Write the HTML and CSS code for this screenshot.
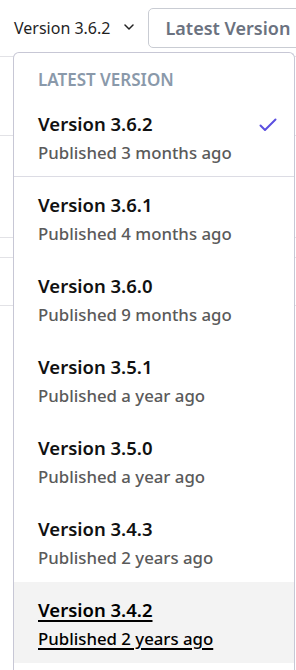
FILE: index.html
```html
<!DOCTYPE html>
<html lang="en">
<head>
<meta charset="utf-8">
<title>Versions</title>
<link rel="stylesheet" href="styles.css">
</head>
<body>
<header class="toolbar">
  <button class="version-toggle" type="button">
    <span class="version-label">Version 3.6.2</span>
    <svg class="chevron" width="10" height="6" viewBox="0 0 10 6" aria-hidden="true"><path d="M1 1l4 4 4-4" fill="none" stroke="#222" stroke-width="1.5" stroke-linecap="round" stroke-linejoin="round"/></svg>
  </button>
  <div class="tag-input">Latest Version</div>
</header>

<main class="page">
  <div class="page-row r1"></div>
  <div class="page-row r2"></div>
  <div class="page-row r3"></div>
  <div class="page-row r4"></div>
  <div class="page-row r5"></div>
</main>

<div class="menu" role="listbox">
  <div class="menu-heading">LATEST VERSION</div>
  <div class="menu-item first selected">
    <div class="item-text">
      <div class="item-title">Version 3.6.2</div>
      <div class="item-sub">Published 3 months ago</div>
    </div>
    <svg class="check" width="18" height="14" viewBox="0 0 18 14" aria-hidden="true"><path d="M1.5 7.5l4.5 4.5 10.5-10.5" fill="none" stroke="#5b4fe0" stroke-width="2" stroke-linecap="round" stroke-linejoin="round"/></svg>
  </div>
  <div class="menu-item">
    <div class="item-text">
      <div class="item-title">Version 3.6.1</div>
      <div class="item-sub">Published 4 months ago</div>
    </div>
  </div>
  <div class="menu-item">
    <div class="item-text">
      <div class="item-title">Version 3.6.0</div>
      <div class="item-sub">Published 9 months ago</div>
    </div>
  </div>
  <div class="menu-item">
    <div class="item-text">
      <div class="item-title">Version 3.5.1</div>
      <div class="item-sub">Published a year ago</div>
    </div>
  </div>
  <div class="menu-item">
    <div class="item-text">
      <div class="item-title">Version 3.5.0</div>
      <div class="item-sub">Published a year ago</div>
    </div>
  </div>
  <div class="menu-item">
    <div class="item-text">
      <div class="item-title">Version 3.4.3</div>
      <div class="item-sub">Published 2 years ago</div>
    </div>
  </div>
  <div class="menu-item hover">
    <div class="item-text">
      <div class="item-title">Version 3.4.2</div>
      <div class="item-sub">Published 2 years ago</div>
    </div>
  </div>
</div>
</body>
</html>
```
FILE: styles.css
```css
html, body {
  margin: 0;
  padding: 0;
  height: 100%;
  overflow: hidden;
  background: #fff;
}
body {
  position: relative;
  font-family: "Noto Sans", "Open Sans", sans-serif;
  color: #111;
}

.toolbar {
  display: flex;
  align-items: center;
  height: 40px;
  padding: 8px 0 0 14px;
}
.version-toggle {
  display: flex;
  align-items: center;
  gap: 14px;
  padding: 0;
  border: 0;
  background: none;
  font: inherit;
  font-size: 16px;
  color: #1f1f1f;
  white-space: nowrap;
}
.chevron {
  display: block;
  margin-top: -2px;
}
.tag-input {
  flex: none;
  margin-left: 14px;
  width: 220px;
  height: 40px;
  box-sizing: border-box;
  border: 1px solid #c9ccd3;
  border-radius: 5px;
  padding-left: 16px;
  display: flex;
  align-items: center;
  font-size: 18px;
  font-weight: 600;
  color: #6b7280;
  white-space: nowrap;
}

.page-row {
  border-bottom: 1px solid #e2e2e6;
}
.r1 { height: 8px; }
.r2 { height: 78px; }
.r3 { height: 101px; }
.r4 { height: 19px; }
.r5 { height: 47px; }

.menu {
  position: absolute;
  left: 13px;
  top: 52px;
  width: 282px;
  box-sizing: border-box;
  border: 1px solid #c7c7d5;
  border-bottom: 0;
  border-radius: 6px 6px 0 0;
  background: #fff;
  padding-bottom: 12px;
}
.menu-heading {
  padding: 17px 24px 6px;
  line-height: 20px;
  font-size: 17px;
  font-weight: 600;
  color: #8a99aa;
}
.menu-item {
  display: flex;
  align-items: flex-start;
  justify-content: space-between;
  height: 81px;
  box-sizing: border-box;
  padding: 15px 17px 0 24px;
}
.menu-item.first {
  border-bottom: 1px solid #dcdce4;
}
.item-title {
  font-size: 18.5px;
  line-height: 26px;
  font-weight: 600;
  color: #111;
  white-space: nowrap;
}
.item-sub {
  margin-top: 5px;
  font-size: 16.8px;
  line-height: 22px;
  font-weight: 500;
  color: #5a5a5a;
  white-space: nowrap;
}
.check {
  display: block;
  margin-top: 7px;
}
.menu-item.hover {
  background: #f3f3f3;
}
.menu-item.hover .item-title,
.menu-item.hover .item-sub {
  color: #000;
  text-decoration: underline;
  text-decoration-thickness: 1.5px;
  text-underline-offset: 3px;
}
```
